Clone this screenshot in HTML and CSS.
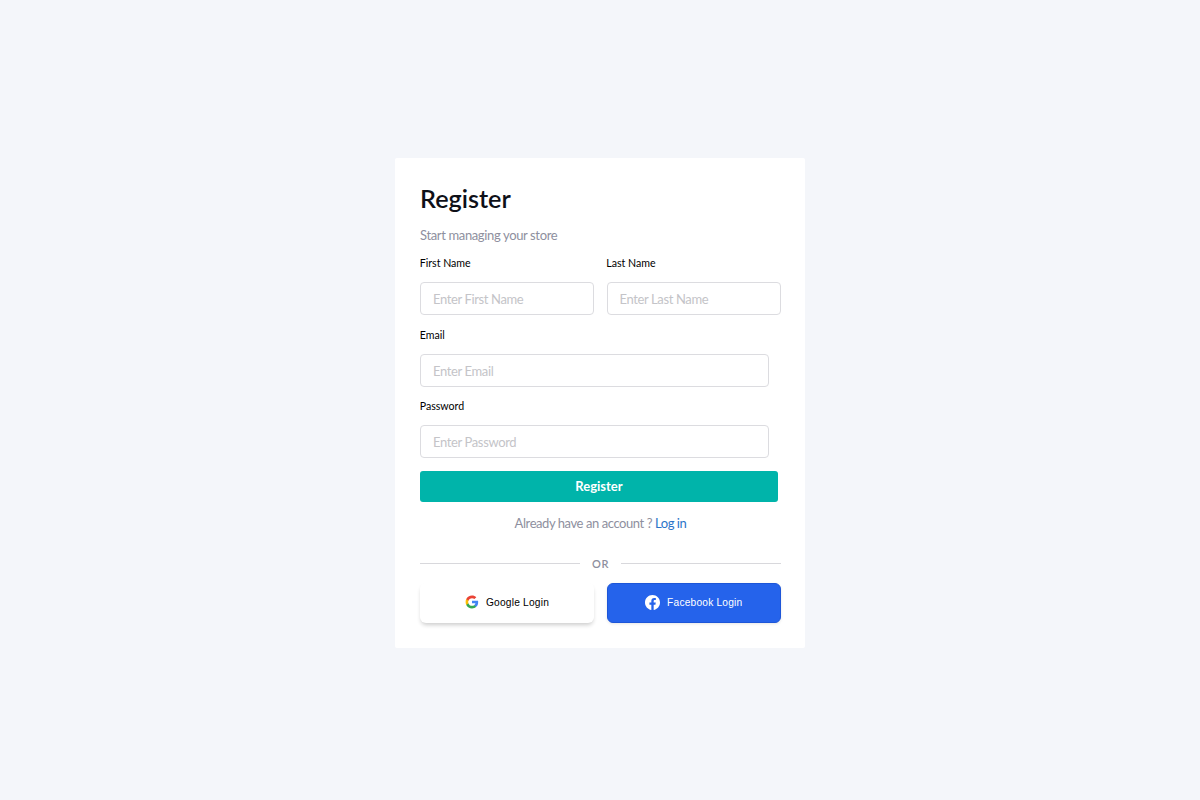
FILE: index.html
```html
<!DOCTYPE html>
<html lang="en">
<head>
    <meta charset="UTF-8">
    <meta name="viewport" content="width=device-width, initial-scale=1.0">
    <title>Register</title>
    <link rel="stylesheet" href="styles.css">
</head>
<body>
    <div class="card">
        <h1>Register</h1>
        <p class="subtitle">Start managing your store</p>

        <div class="name-row">
            <div class="field">
                <label for="firstName">First Name</label>
                <input type="text" id="firstName" placeholder="Enter First Name">
            </div>
            <div class="field">
                <label for="lastName">Last Name</label>
                <input type="text" id="lastName" placeholder="Enter Last Name">
            </div>
        </div>

        <div class="field field-wide">
            <label for="email">Email</label>
            <input type="email" id="email" placeholder="Enter Email">
        </div>

        <div class="field field-wide">
            <label for="password">Password</label>
            <input type="password" id="password" placeholder="Enter Password">
        </div>

        <button class="btn-register">Register</button>

        <p class="login-text">Already have an account ? <a href="#">Log in</a></p>

        <div class="divider"><span>OR</span></div>

        <div class="social-row">
            <button class="btn-social btn-google">
                <svg class="social-icon" viewBox="0 0 24 24">
                    <path fill="#4285F4" d="M22.56 12.25c0-.78-.07-1.53-.2-2.25H12v4.26h5.92c-.26 1.37-1.04 2.53-2.21 3.31v2.77h3.57c2.08-1.92 3.28-4.74 3.28-8.09z"/>
                    <path fill="#34A853" d="M12 23c2.97 0 5.46-.98 7.28-2.66l-3.57-2.77c-.98.66-2.23 1.06-3.71 1.06-2.86 0-5.29-1.93-6.16-4.53H2.18v2.84C3.99 20.53 7.7 23 12 23z"/>
                    <path fill="#FBBC05" d="M5.84 14.09c-.22-.66-.35-1.36-.35-2.09s.13-1.43.35-2.09V7.07H2.18C1.43 8.55 1 10.22 1 12s.43 3.45 1.18 4.93l3.66-2.84z"/>
                    <path fill="#EA4335" d="M12 5.38c1.62 0 3.06.56 4.21 1.64l3.15-3.15C17.45 2.09 14.97 1 12 1 7.7 1 3.99 3.47 2.18 7.07l3.66 2.84c.87-2.6 3.3-4.53 6.16-4.53z"/>
                </svg>
                Google Login
            </button>
            <button class="btn-social btn-facebook">
                <svg class="social-icon" viewBox="0 0 24 24">
                    <path fill="#fff" d="M24 12.07C24 5.4 18.63 0 12 0S0 5.4 0 12.07c0 6.03 4.39 11.02 10.13 11.93v-8.44H7.08v-3.49h3.05V9.41c0-3.02 1.79-4.69 4.53-4.69 1.31 0 2.69.24 2.69.24v2.97h-1.51c-1.49 0-1.96.93-1.96 1.89v2.25h3.33l-.53 3.49h-2.8V24C19.61 23.09 24 18.1 24 12.07z"/>
                </svg>
                Facebook Login
            </button>
        </div>
    </div>
</body>
</html>
```

FILE: styles.css
```css
* {
    box-sizing: border-box;
}
body {
    margin: 0;
    min-height: 800px;
    padding-top: 158px;
    background-color: #f4f6fa;
    font-family: Lato, sans-serif;
}
.card {
    width: 410px;
    height: 490px;
    margin: 0 auto;
    padding: 24px 24px 0 25px;
    background: white;
    border-radius: 2px;
}
h1 {
    margin: 0;
    font-size: 25.2px;
    line-height: 32px;
    font-weight: 600;
    color: #0e1018;
}
.subtitle {
    margin: 13px 0 0;
    font-size: 13px;
    line-height: 16px;
    letter-spacing: -0.36px;
    color: #8e8f9e;
}
.name-row {
    display: grid;
    grid-template-columns: 174px 174.5px;
    gap: 12.5px;
    margin-top: 14px;
}
.field label {
    display: block;
    height: 14px;
    margin-left: -0.3px;
    font-size: 10.6px;
    line-height: 13px;
    color: #000;
}
.field input {
    display: block;
    width: 100%;
    height: 33px;
    margin-top: 11px;
    padding: 1px 12px 0;
    border: 1px solid #dcdce0;
    border-radius: 4px;
    background: white;
    font-family: Lato, sans-serif;
    font-size: 13px;
    letter-spacing: -0.37px;
    outline: none;
}
.field-wide input {
    padding-top: 0;
}
.field input::placeholder {
    color: #c4c4c8;
    opacity: 1;
}
.field-wide {
    width: 349px;
    margin-top: 13px;
}
.name-row + .field-wide {
    margin-top: 14px;
}
.btn-register {
    display: block;
    width: 358px;
    height: 31px;
    margin-top: 13px;
    padding: 0 0 1px;
    border: none;
    border-radius: 3px;
    background-color: #00b4aa;
    color: white;
    font-family: Lato, sans-serif;
    font-size: 13px;
    font-weight: 700;
}
.login-text {
    margin: 13px 0 0;
    text-align: center;
    font-size: 13px;
    line-height: 16px;
    letter-spacing: -0.43px;
    color: #8e8f9e;
}
.login-text a {
    color: #2b74c9;
    text-decoration: none;
}
.divider {
    display: flex;
    align-items: center;
    gap: 12px;
    margin-top: 23px;
    font-size: 11px;
    line-height: 16px;
    font-weight: 600;
    letter-spacing: 0.6px;
    color: #8e8f9e;
}
.divider span {
    margin-top: 2px;
}
.divider::before,
.divider::after {
    content: "";
    flex: 1;
    height: 1px;
    background: #d8d8dc;
}
.social-row {
    display: grid;
    grid-template-columns: 174px 174.5px;
    gap: 12.5px;
    margin-top: 11px;
}
.btn-social {
    display: flex;
    align-items: center;
    justify-content: center;
    gap: 7px;
    height: 40px;
    padding: 0 0 2px;
    border-radius: 6px;
    font-family: "Liberation Sans", Arial, sans-serif;
    font-size: 10.2px;
    letter-spacing: 0.2px;
}
.social-icon {
    width: 14px;
    height: 14px;
}
.btn-google {
    border: none;
    background: white;
    color: #000;
    box-shadow: 0 3px 4px -1px rgba(0,0,0,0.2);
}
.btn-facebook {
    border: 1px solid #1d56d8;
    background-color: #2563eb;
    color: white;
    box-shadow: 0 1px 3px rgba(0,0,0,0.1);
}
.btn-facebook .social-icon {
    width: 15px;
    height: 15px;
}
```
